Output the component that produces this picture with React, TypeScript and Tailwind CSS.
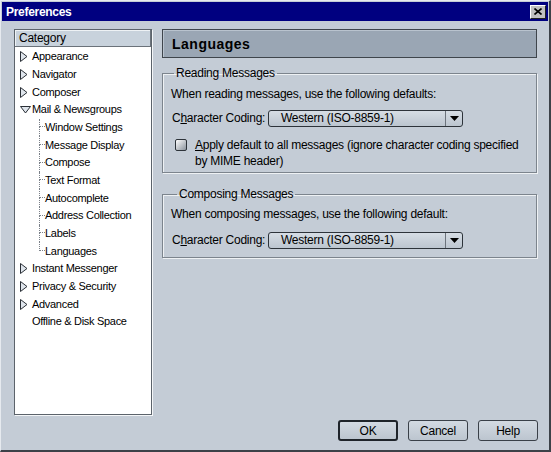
import React from "react";

type TreeItem = {
  label: string;
  kind: "closed" | "open" | "leaf" | "child" | "last";
};

const items: TreeItem[] = [
  { label: "Appearance", kind: "closed" },
  { label: "Navigator", kind: "closed" },
  { label: "Composer", kind: "closed" },
  { label: "Mail & Newsgroups", kind: "open" },
  { label: "Window Settings", kind: "child" },
  { label: "Message Display", kind: "child" },
  { label: "Compose", kind: "child" },
  { label: "Text Format", kind: "child" },
  { label: "Autocomplete", kind: "child" },
  { label: "Address Collection", kind: "child" },
  { label: "Labels", kind: "child" },
  { label: "Languages", kind: "last" },
  { label: "Instant Messenger", kind: "closed" },
  { label: "Privacy & Security", kind: "closed" },
  { label: "Advanced", kind: "closed" },
  { label: "Offline & Disk Space", kind: "leaf" },
];

function Twisty({ open }: { open: boolean }) {
  if (open) {
    return (
      <svg width="11" height="8" viewBox="0 0 11 8" className="shrink-0">
        <polygon points="0.5,0.5 10.5,0.5 5.5,7" fill="#dfe5ec" stroke="#2a2f36" strokeWidth="1" />
      </svg>
    );
  }
  return (
    <svg width="8" height="11" viewBox="0 0 8 11" className="shrink-0">
      <polygon points="0.5,0.5 7,5.5 0.5,10.5" fill="#dfe5ec" stroke="#2a2f36" strokeWidth="1" />
    </svg>
  );
}

function Row({ item }: { item: TreeItem }) {
  if (item.kind === "child" || item.kind === "last") {
    return (
      <div className="flex h-[17.67px] items-stretch pl-[24px]">
        <div className="flex w-[6px] flex-col">
          <div className="h-1/2 border-b border-l border-dotted border-[#7a8088]" />
          <div
            className={
              item.kind === "last"
                ? "h-1/2"
                : "h-1/2 border-l border-dotted border-[#7a8088]"
            }
          />
        </div>
        <span className="self-center leading-none">{item.label}</span>
      </div>
    );
  }
  return (
    <div className="flex h-[17.67px] items-center pl-[5px]">
      <div className="flex w-[11px] justify-start">
        {item.kind === "closed" && <Twisty open={false} />}
        {item.kind === "open" && <Twisty open />}
      </div>
      <span className="ml-[1px] leading-none">{item.label}</span>
    </div>
  );
}

function Select() {
  return (
    <div className="flex h-[17px] w-[195px] items-stretch rounded-[3px] border border-[#2d333a] bg-gradient-to-b from-[#d6dde5] to-[#bcc5cf]">
      <div className="flex flex-1 items-center pl-[12px] leading-none whitespace-nowrap">Western (ISO-8859-1)</div>
      <div className="flex w-[17px] items-center justify-center border-l border-[#6c737c]">
        <svg width="9" height="5" viewBox="0 0 9 5">
          <polygon points="0,0 9,0 4.5,5" fill="#000" />
        </svg>
      </div>
    </div>
  );
}

function Button({ label, primary }: { label: string; primary?: boolean }) {
  return (
    <div
      className={
        "flex h-[21px] w-[60px] items-center justify-center rounded-[3px] bg-gradient-to-b from-[#d3dae2] to-[#bcc5cf] leading-none " +
        (primary ? "border-2 border-[#1f242a]" : "border border-[#3a4048]")
      }
    >
      {label}
    </div>
  );
}

export default function App() {
  return (
    <div
      className="flex h-[452px] w-[551px] flex-col border-b-2 border-l border-r-2 border-t border-b-[#3c4148] border-l-[#e6eaef] border-r-[#3c4148] border-t-[#e6eaef] bg-[#c4ccd6] text-[12px] tracking-[-0.25px] text-black"
      style={{ fontFamily: '"Liberation Sans", Arial, sans-serif' }}
    >
      {/* title bar */}
      <div className="mx-[1px] mt-[1px] flex h-[19px] items-center justify-between bg-[#000080] pl-[4px] pr-[2px]">
        <span className="text-[12px] font-bold leading-none tracking-[-0.3px] text-white">Preferences</span>
        <div className="flex h-[14px] w-[16px] items-center justify-center border border-b-[#202020] border-l-white border-r-[#202020] border-t-white bg-[#c0c0c0]">
          <svg width="8" height="7" viewBox="0 0 8 7">
            <path d="M0.5 0.5 L7.5 6.5 M7.5 0.5 L0.5 6.5" stroke="#000" strokeWidth="1.6" />
          </svg>
        </div>
      </div>

      <div className="flex flex-1 flex-col pl-[13px] pr-[11px] pt-[8px]">
        <div className="flex gap-[10px]">
          {/* category tree */}
          <div className="h-[386px] w-[138px] border border-[#5c636b] bg-white text-[11px] tracking-[-0.3px] shadow-[1px_1px_0_#f4f6f8]">
            <div className="flex h-[17px] items-center border-b border-r border-[#6b727a] bg-[#c8d2dc] pl-[4px] text-[12px] leading-none tracking-[-0.25px] shadow-[inset_1px_1px_0_#eef2f5]">
              Category
            </div>
            <div className="pt-[1px]">
              {items.map((item) => (
                <Row key={item.label} item={item} />
              ))}
            </div>
          </div>

          {/* right panel */}
          <div className="flex w-[375px] flex-col">
            <div className="flex h-[29px] items-center border border-[#3f454c] bg-[#9aa6b4] pl-[9px] text-[14px] font-bold leading-none tracking-[0.5px] shadow-[inset_1px_1px_0_#b9c3ce]">
              Languages
            </div>

            <fieldset className="mt-[8px] h-[107px] border border-[#7c848d] pl-[8px] shadow-[1px_1px_0_#eef1f4,inset_1px_1px_0_#eef1f4]">
              <legend className="ml-[3px] px-[2px] leading-[14px]">Reading Messages</legend>
              <div className="pt-[7px] leading-[14px] whitespace-nowrap">When reading messages, use the following defaults:</div>
              <div className="mt-[8px] flex items-center">
                <span className="w-[97px] shrink-0 whitespace-nowrap pl-[1px]">
                  C<span className="underline">h</span>aracter Coding:
                </span>
                <Select />
              </div>
              <div className="mt-[10px] flex items-start pl-[4px]">
                <div className="mt-[2px] h-[12px] w-[12px] shrink-0 rounded-[2px] border border-[#2d333a] bg-gradient-to-br from-white to-[#8c949e]" />
                <div className="ml-[8px] max-w-[338px] leading-[16px] first-letter:underline">
                  Apply default to all messages (ignore character coding specified by MIME header)
                </div>
              </div>
            </fieldset>

            <fieldset className="mt-[14px] h-[71px] border border-[#7c848d] pl-[8px] shadow-[1px_1px_0_#eef1f4,inset_1px_1px_0_#eef1f4]">
              <legend className="ml-[6px] px-[2px] leading-[14px]">Composing Messages</legend>
              <div className="pt-[6px] leading-[14px] whitespace-nowrap">When composing messages, use the following default:</div>
              <div className="mt-[10px] flex items-center">
                <span className="w-[97px] shrink-0 whitespace-nowrap pl-[1px]">
                  C<span className="underline">h</span>aracter Coding:
                </span>
                <Select />
              </div>
            </fieldset>
          </div>
        </div>

        <div className="mt-auto mb-[9px] flex justify-end gap-[10px]">
          <Button label="OK" primary />
          <Button label="Cancel" />
          <Button label="Help" />
        </div>
      </div>
    </div>
  );
}
